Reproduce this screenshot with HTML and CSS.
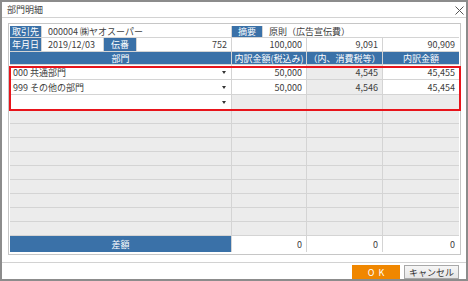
FILE: index.html
```html
<!DOCTYPE html>
<html lang="ja">
<head>
  <meta charset="UTF-8">
  <title>部門明細</title>
  <link rel="stylesheet" href="styles.css">
</head>
<body>
  <div class="window">
    <div class="titlebar">
      <span class="title">部門明細</span>
      <svg class="close" width="9" height="9" viewBox="0 0 9 9">
        <path d="M0.5 0.5 L8.5 8.5 M8.5 0.5 L0.5 8.5" stroke="#555" stroke-width="1" fill="none"/>
      </svg>
    </div>

    <div class="content">
      <div class="panel">
        <div class="grid">
          <div class="lbl">取引先</div>
          <div class="val txt s3">000004 ㈱ヤオスーパー</div>
          <div class="lbl">摘要</div>
          <div class="val txt s3">原則（広告宣伝費）</div>

          <div class="lbl">年月日</div>
          <div class="val txt">2019/12/03</div>
          <div class="lbl">伝番</div>
          <div class="val num">752</div>
          <div class="val num s2">100,000</div>
          <div class="val num">9,091</div>
          <div class="val num">90,909</div>

          <div class="hd s4">部門</div>
          <div class="hd s2">内訳金額(税込み)</div>
          <div class="hd">（内、消費税等）</div>
          <div class="hd">内訳金額</div>

          <div class="val s4 dept">000 共通部門<i class="arrow"></i></div>
          <div class="val num s2">50,000</div>
          <div class="val num ro">4,545</div>
          <div class="val num">45,455</div>

          <div class="val s4 dept">999 その他の部門<i class="arrow"></i></div>
          <div class="val num s2">50,000</div>
          <div class="val num ro">4,546</div>
          <div class="val num">45,454</div>

          <div class="val s4 dept"><i class="arrow"></i></div>
          <div class="val s2 ro"></div>
          <div class="val ro"></div>
          <div class="val ro"></div>

          <div class="val s4 ro"></div><div class="val s2 ro"></div><div class="val ro"></div><div class="val ro"></div>
          <div class="val s4 ro"></div><div class="val s2 ro"></div><div class="val ro"></div><div class="val ro"></div>
          <div class="val s4 ro"></div><div class="val s2 ro"></div><div class="val ro"></div><div class="val ro"></div>
          <div class="val s4 ro"></div><div class="val s2 ro"></div><div class="val ro"></div><div class="val ro"></div>
          <div class="val s4 ro"></div><div class="val s2 ro"></div><div class="val ro"></div><div class="val ro"></div>
          <div class="val s4 ro"></div><div class="val s2 ro"></div><div class="val ro"></div><div class="val ro"></div>
          <div class="val s4 ro"></div><div class="val s2 ro"></div><div class="val ro"></div><div class="val ro"></div>
          <div class="val s4 ro"></div><div class="val s2 ro"></div><div class="val ro"></div><div class="val ro"></div>
          <div class="val s4 ro"></div><div class="val s2 ro"></div><div class="val ro"></div><div class="val ro"></div>

          <div class="hd s4">差額</div>
          <div class="val num s2">0</div>
          <div class="val num">0</div>
          <div class="val num">0</div>
        </div>
        <div class="highlight"></div>
      </div>
    </div>

    <div class="footer">
      <button class="btn ok">OK</button>
      <button class="btn cancel">キャンセル</button>
    </div>
  </div>
</body>
</html>
```

FILE: styles.css
```css
html, body {
  margin: 0;
  padding: 0;
  background: #ffffff;
}
body {
  font-family: "Noto Sans CJK JP", "Noto Sans", sans-serif;
  font-size: 9px;
  color: #404040;
}
.window {
  width: 468px;
  height: 281px;
  box-sizing: border-box;
  border: 2px solid #8c8c8c;
  background: #ffffff;
}
.titlebar {
  height: 15px;
  border-bottom: 1px solid #d2d2d2;
  display: flex;
  align-items: center;
  justify-content: space-between;
  padding: 0 2px 0 5px;
}
.title {
  color: #444;
  line-height: 1;
}
.close {
  display: block;
  margin-top: 2px;
}
.content {
  padding: 5px 5px 0 6px;
}
.panel {
  position: relative;
  width: 453px;
  height: 232px;
  box-sizing: border-box;
  border: 1px solid #c6c6c6;
  padding: 1px;
  padding-top: 2px;
}
.grid {
  display: grid;
  grid-template-columns: 31px 61px 32px 94px 30px 43px 75px 76px;
  grid-template-rows: 11px 13px 12px repeat(3, 14px) repeat(9, 13px) 16px;
  gap: 1px;
  background: #d4d4d4;
}
.grid > div {
  display: flex;
  align-items: center;
  line-height: 1;
  white-space: nowrap;
  overflow: hidden;
}
.lbl, .hd {
  background: #3a71a8;
  color: #ffffff;
  justify-content: center;
}
.val {
  background: #ffffff;
  padding: 0 4px;
}
.txt {
  padding-left: 6px;
}
.num {
  justify-content: flex-end;
}
.ro {
  background: #ececec;
}
.s2 { grid-column: span 2; }
.s3 { grid-column: span 3; }
.s4 { grid-column: span 4; }
.dept {
  position: relative;
  padding-left: 3px;
}
.arrow {
  position: absolute;
  right: 5px;
  top: 50%;
  margin-top: -1px;
  width: 0;
  height: 0;
  border-left: 2.5px solid transparent;
  border-right: 2.5px solid transparent;
  border-top: 3px solid #333;
}
.highlight {
  position: absolute;
  left: 0;
  top: 42px;
  width: 452px;
  height: 45px;
  box-sizing: border-box;
  border: 2px solid #e8141b;
}
.footer {
  margin-top: 7px;
  border-top: 1px solid #d2d2d2;
  display: flex;
  justify-content: flex-end;
  gap: 4px;
  padding: 2px 7px 0 0;
}
.btn {
  height: 14px;
  padding: 0;
  font-family: inherit;
  font-size: 9px;
  line-height: 1;
  cursor: pointer;
}
.ok {
  width: 48px;
  border: none;
  background: #f08700;
  color: #ffffff;
  letter-spacing: 4px;
  text-indent: 4px;
}
.cancel {
  width: 55px;
  border: 1px solid #a8a8a8;
  background: linear-gradient(#f6f6f6, #e6e6e6);
  color: #333;
}
```
